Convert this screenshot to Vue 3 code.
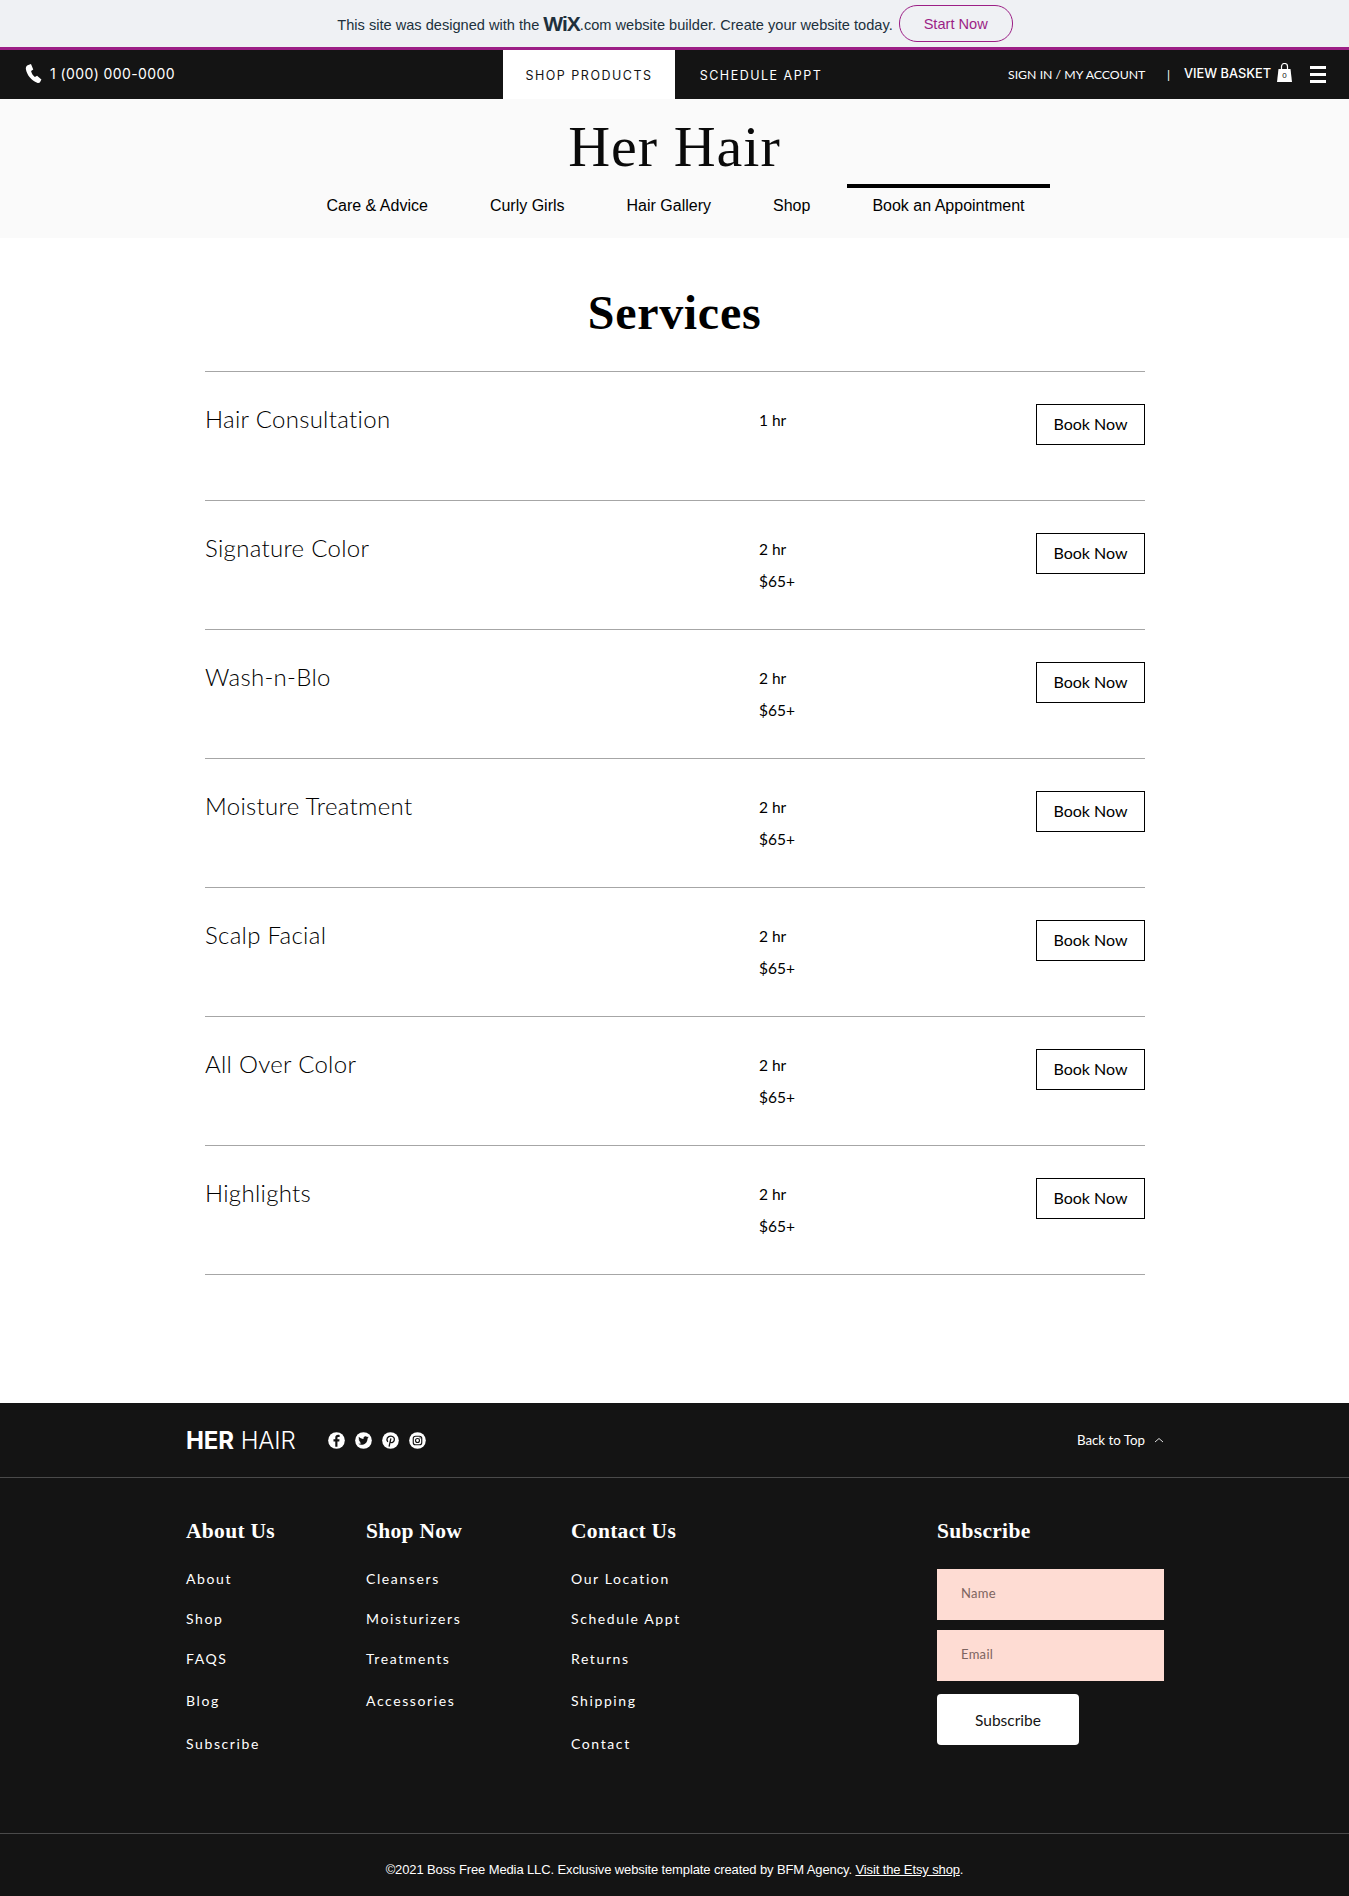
<script setup>
const services = [
  { name: 'Hair Consultation', time: '1 hr' },
  { name: 'Signature Color', time: '2 hr', price: '$65+' },
  { name: 'Wash-n-Blo', time: '2 hr', price: '$65+' },
  { name: 'Moisture Treatment', time: '2 hr', price: '$65+' },
  { name: 'Scalp Facial', time: '2 hr', price: '$65+' },
  { name: 'All Over Color', time: '2 hr', price: '$65+' },
  { name: 'Highlights', time: '2 hr', price: '$65+' }
]
const nav = ['Care & Advice', 'Curly Girls', 'Hair Gallery', 'Shop', 'Book an Appointment']
const columns = [
  { title: 'About Us', cls: 'c1', links: ['About', 'Shop', 'FAQS', 'Blog', 'Subscribe'] },
  { title: 'Shop Now', cls: 'c2', links: ['Cleansers', 'Moisturizers', 'Treatments', 'Accessories'] },
  { title: 'Contact Us', cls: 'c3', links: ['Our Location', 'Schedule Appt', 'Returns', 'Shipping', 'Contact'] }
]
</script>

<template>
  <div class="page">
    <div class="banner">
      <span class="banner-text">This site was designed with the <b class="wix">WiX</b>.com website builder. Create your website today.</span>
      <span class="start">Start Now</span>
    </div>
    <div class="topbar">
      <div class="phone">
        <svg width="19" height="19" viewBox="0 0 20 20"><path fill="#fff" d="M2.800 1.400 6.300 0l2.400 5.700-2.300 1.700c.6 2.700 2 4.900 4 6.300l2.300-1.300 4.600 3.800-1.500 2.900c-.5.800-1.800 1.100-3 .7C6.800 17.700 1.900 11.500.9 5.300c-.2-1.700.6-3.200 1.900-3.900z"/></svg>
        <span>1 (000) 000-0000</span>
      </div>
      <div class="tab active">SHOP PRODUCTS</div>
      <div class="tab">SCHEDULE APPT</div>
      <div class="account">
        <span class="signin">SIGN IN / MY ACCOUNT</span>
        <span class="pipe">|</span>
        <span class="basket">VIEW BASKET</span>
        <span class="bag"><svg width="15" height="19" viewBox="0 0 15 19"><path fill="none" stroke="#fff" stroke-width="1.200" d="M4.500 7V3.500a3 3 0 0 1 6 0V7"/><path fill="#fff" d="M1.500 6h12l1.500 13H0z"/></svg><i>0</i></span>
        <span class="burger"><i></i><i></i><i></i></span>
      </div>
    </div>
    <header class="head">
      <h1 class="brand">Her Hair</h1>
      <nav class="nav">
        <a v-for="(n, i) in nav" :key="n" :class="{ current: i === 4 }">{{ n }}</a>
      </nav>
    </header>
    <main class="main">
      <h2 class="title">Services</h2>
      <div class="list">
        <div v-for="s in services" :key="s.name" class="row">
          <div class="name">{{ s.name }}</div>
          <div class="info">
            <div>{{ s.time }}</div>
            <div v-if="s.price" class="price">{{ s.price }}</div>
          </div>
          <div class="book">Book Now</div>
        </div>
      </div>
    </main>
    <footer class="footer">
      <div class="foot-top">
        <div class="logo"><b>HER</b> HAIR</div>
        <div class="social">
          <svg viewBox="0 0 18 18"><circle cx="9" cy="9" r="8.800" fill="#fff"/><path fill="#141414" d="M10 15.500V10h1.900l.3-2.300H10V6.300c0-.7.200-1.100 1.100-1.100h1.200V3.100c-.2 0-.9-.1-1.700-.1-1.700 0-2.900 1-2.900 3v1.700H5.800V10h1.900v5.500z"/></svg>
          <svg viewBox="0 0 18 18"><circle cx="9" cy="9" r="8.800" fill="#fff"/><path fill="#141414" d="M14.500 5.600c-.4.200-.9.300-1.300.4.500-.3.800-.8 1-1.300-.4.300-.9.500-1.400.6a2.200 2.200 0 0 0-3.800 2C7 7.200 5.300 6.400 4.200 5c-.6 1-.3 2.300.7 3-.4 0-.7-.1-1-.3 0 1.100.8 2 1.800 2.300-.3.100-.7.100-1 0 .3.900 1.100 1.500 2 1.600-1 .7-2.200 1-3.300.9 3.200 2 9.800 1 9.900-5.700.4-.3.800-.7 1.200-1.200z"/></svg>
          <svg viewBox="0 0 18 18"><circle cx="9" cy="9" r="8.800" fill="#fff"/><path fill="none" stroke="#141414" stroke-width="1.400" stroke-linecap="round" d="M7.600 15 9.300 7.200M5.900 10c-1.600-2.400 0-5.700 3.400-5.700 2.800 0 4.200 2.100 3.700 4.400-.5 2.500-3.100 3.200-4.300 1.700"/></svg>
          <svg viewBox="0 0 18 18"><circle cx="9" cy="9" r="8.800" fill="#fff"/><rect x="4.500" y="4.500" width="9" height="9" rx="2.400" fill="none" stroke="#141414" stroke-width="1.200"/><circle cx="9" cy="9" r="2.100" fill="none" stroke="#141414" stroke-width="1.200"/><circle cx="11.700" cy="6.300" r=".7" fill="#141414"/></svg>
        </div>
        <div class="back">Back to Top
          <svg width="10" height="6" viewBox="0 0 10 6"><path d="M1 5 5 1.500 9 5" fill="none" stroke="#ddd" stroke-width="1"/></svg>
        </div>
      </div>
      <div class="foot-main">
        <div v-for="c in columns" :key="c.title" class="col" :class="c.cls">
          <h3>{{ c.title }}</h3>
          <ul>
            <li v-for="l in c.links" :key="l">{{ l }}</li>
          </ul>
        </div>
        <div class="col sub">
          <h3>Subscribe</h3>
          <div class="field">Name</div>
          <div class="field second">Email</div>
          <div class="sub-btn">Subscribe</div>
        </div>
      </div>
      <div class="foot-bottom">©2021 Boss Free Media LLC. Exclusive website template created by BFM Agency. <u>Visit the Etsy shop</u>.</div>
    </footer>
  </div>
</template>

<style>
body { margin: 0; background: #fff; }
</style>

<style scoped>
.page { width: 1349px; height: 1896px; overflow: hidden; font-family: "Liberation Sans", Arial, sans-serif; color: #000; }
.banner { height: 47px; background: #eff1f4; border-bottom: 3px solid #9c1f86; display: flex; align-items: center; justify-content: center; gap: 6px; padding-left: 1px; color: #20303c; font-size: 14.600px; }
.wix { font-size: 21px; font-weight: 700; letter-spacing: -1px; vertical-align: -1px; }
.start { width: 114px; height: 37px; border: 1px solid #9c1f86; border-radius: 18px; color: #9c1f86; display: flex; align-items: center; justify-content: center; font-size: 14.600px; box-sizing: border-box; margin-top: 0; }
.topbar { height: 49px; background: #141414; display: flex; color: #fff; align-items: stretch; }
.phone { width: 503px; display: flex; align-items: center; gap: 6px; padding-left: 25px; box-sizing: border-box; font-family: Inter, sans-serif; font-size: 14px; letter-spacing: .4px; margin-top: -2px; }
.tab { display: flex; align-items: center; justify-content: center; padding-top: 2px; box-sizing: border-box; width: 172px; font-family: Inter, sans-serif; font-size: 12.500px; letter-spacing: 1.500px; }
.tab.active { background: #fff; color: #141414; }
.account { flex: 1; display: flex; align-items: center; font-family: Lato, sans-serif; font-size: 12.300px; padding-left: 161px; }
.signin { font-weight: 400; width: 159px; white-space: nowrap; }
.pipe { width: 17px; }
.basket { font: 500 12.800px Inter, sans-serif; width: 93px; white-space: nowrap; margin-top: -2px; }
.bag { position: relative; width: 15px; height: 19px; display: block; margin-top: -4px; }
.bag svg { display: block; }
.bag i { position: absolute; left: 0; right: 0; top: 8px; text-align: center; color: #141414; font: 8px "Liberation Sans", sans-serif; }
.burger { display: flex; flex-direction: column; gap: 4px; margin-left: 18px; width: 16px; }
.burger i { display: block; height: 3px; background: #fff; }
.head { height: 139px; background: #fafafa; display: flex; flex-direction: column; align-items: center; }
.brand { margin: 17px 0 0; font: 400 58px/62px "Liberation Serif", serif; letter-spacing: 1px; color: #0a0a0a; height: 68px; }
.nav { display: flex; font-size: 16px; height: 54px; margin-left: 2px; }
.nav a { padding: 8px 25.500px 0; border-top: 4px solid transparent; height: 37px; line-height: 20px; white-space: nowrap; margin-right: 11px; }
.nav a:last-child { border-top-color: #000; margin-right: 0; }
.main { height: 1165px; }
.title { margin: 0; padding-top: 45px; text-align: center; font: 700 48px/60px "Liberation Serif", serif; letter-spacing: .7px; height: 88px; }
.list { margin: 0 204px 0 205px; border-top: 1px solid #a6a6a6; }
.row { height: 128px; border-bottom: 1px solid #a6a6a6; display: flex; position: relative; }
.name { width: 554px; padding-top: 32px; font: 300 24px/30px Lato, sans-serif; letter-spacing: .3px; color: #000; }
.info { flex: 1; padding-top: 39px; font: 400 15.500px/18px Lato, sans-serif; }
.price { margin-top: 14px; }
.book { width: 109px; height: 41px; margin-top: 32px; border: 1px solid #000; box-sizing: border-box; display: flex; align-items: center; justify-content: center; font: 400 16px Lato, sans-serif; padding-bottom: 2px; }
.footer { height: 493px; background: #141414; color: #fff; font-family: Lato, sans-serif; }
.foot-top { height: 74px; border-bottom: 1px solid #4a4a4a; display: flex; align-items: center; padding: 0 185px 0 186px; position: relative; }
.logo { font: 300 24px Inter, sans-serif; width: 142px; letter-spacing: -.1px; white-space: nowrap; }
.logo b { font-weight: 700; }
.social { display: flex; gap: 10px; }
.social svg { width: 17px; height: 17px; display: block; }
.back { margin-left: auto; font-size: 13.300px; display: flex; align-items: center; gap: 9px; }
.foot-main { height: 356px; display: flex; position: relative; box-sizing: border-box; border-bottom: 1px solid #4a4a4a; padding-left: 186px; }
.col h3 { margin: 0; padding-top: 39px; font: 700 21.500px/28px "Liberation Serif", serif; letter-spacing: .3px; }
.col ul { margin: 24px 0 0; padding: 0; list-style: none; font-size: 14px; letter-spacing: 1.600px; line-height: 20px; }
.col li + li { margin-top: 20px; }
.col li:nth-child(n+4) { margin-top: 22px; }
.col li:nth-child(5) { margin-top: 23px; }
.c1 { width: 180px; }
.c2 { width: 205px; }
.c3 { width: 366px; }
.sub { width: 227px; }
.field { background: #fedcd3; height: 51px; color: #7d6460; font-size: 13px; line-height: 49px; padding-left: 24px; margin-top: 24px; letter-spacing: .3px; }
.field.second { margin-top: 10px; }
.sub-btn { width: 142px; height: 51px; margin-top: 13px; background: #fff; color: #141414; border-radius: 4px; display: flex; align-items: center; justify-content: center; font-size: 15.500px; }
.foot-bottom { text-align: center; font: 400 13px/72px "Liberation Sans", sans-serif; height: 62px; letter-spacing: -.12px; }
</style>
